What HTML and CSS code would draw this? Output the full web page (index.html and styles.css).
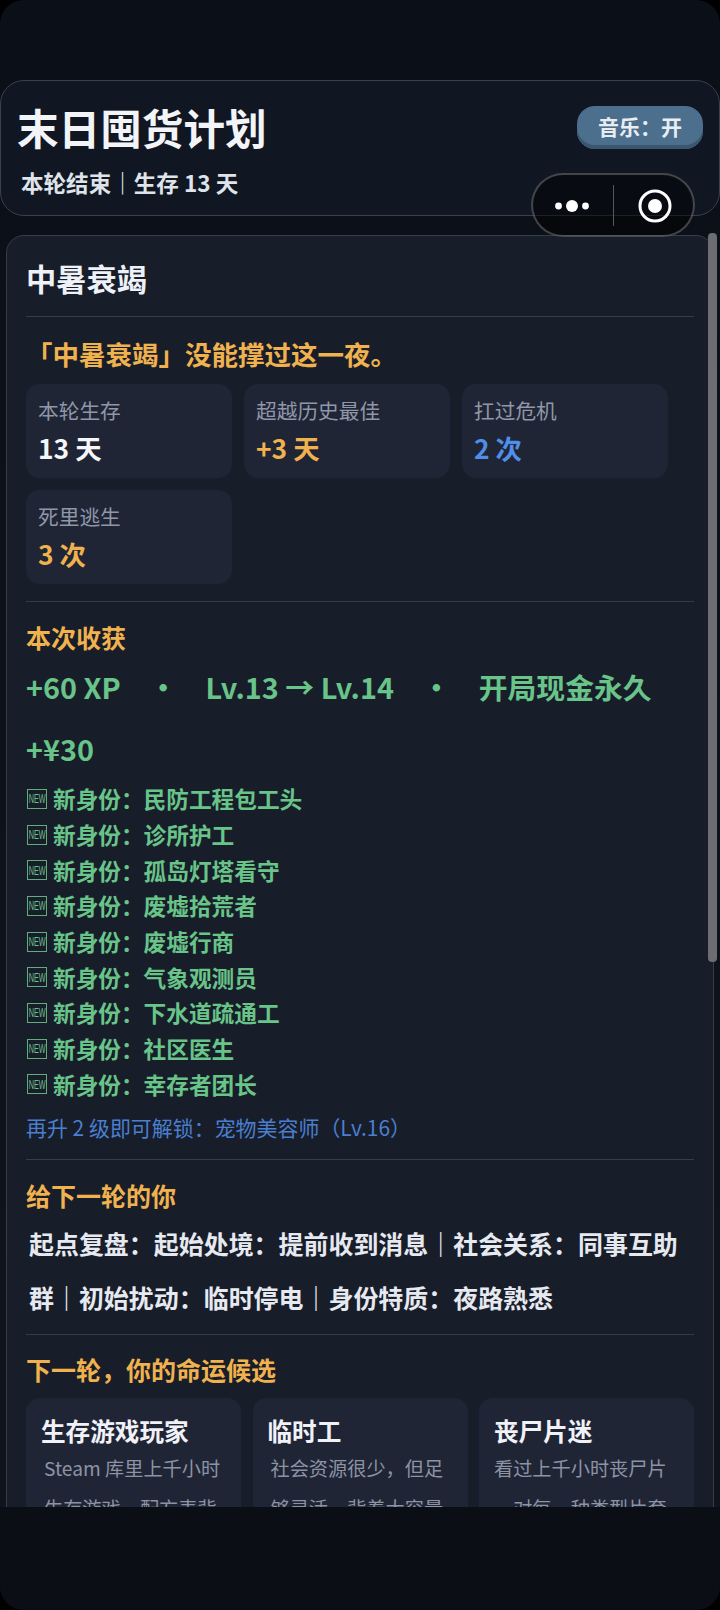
FILE: index.html
```html
<!DOCTYPE html>
<html lang="zh-CN">
<head>
  <meta charset="UTF-8" />
  <title>末日囤货计划</title>
  <meta name="viewport" content="width=device-width, initial-scale=1.0" />
  <link rel="stylesheet" href="styles.css">
</head>
<body>
  <div class="screen">
    <div class="top-space"></div>

    <div class="header">
      <div>
        <div class="game-title">末日囤货计划</div>
        <div class="game-sub">本轮结束｜生存 13 天</div>
      </div>
      <button class="music-btn">音乐：开</button>
    </div>

    <!-- mini program capsule -->
    <div class="capsule">
      <svg class="capsule-more" width="38" height="14" viewBox="0 0 38 14">
        <circle cx="5.5" cy="7" r="3.4" fill="#fff" />
        <circle cx="19" cy="7" r="6" fill="#fff" />
        <circle cx="32.5" cy="7" r="3.4" fill="#fff" />
      </svg>
      <span class="capsule-line"></span>
      <svg class="capsule-close" width="34" height="34" viewBox="0 0 34 34">
        <circle cx="17" cy="17" r="15" fill="none" stroke="#fff" stroke-width="3" />
        <circle cx="17" cy="17" r="7" fill="#fff" />
      </svg>
    </div>

    <div class="panel-wrap">
      <div class="panel">
        <h2 class="panel-title">中暑衰竭</h2>

        <div class="section first">
          <p class="death-text">「中暑衰竭」没能撑过这一夜。</p>
          <div class="stats">
            <div class="stat">
              <div class="stat-label">本轮生存</div>
              <div class="stat-value">13 天</div>
            </div>
            <div class="stat">
              <div class="stat-label">超越历史最佳</div>
              <div class="stat-value orange">+3 天</div>
            </div>
            <div class="stat">
              <div class="stat-label">扛过危机</div>
              <div class="stat-value blue">2 次</div>
            </div>
            <div class="stat">
              <div class="stat-label">死里逃生</div>
              <div class="stat-value orange">3 次</div>
            </div>
          </div>
        </div>

        <div class="section">
          <h3 class="section-title">本次收获</h3>
          <div class="rewards">
            <span>+60 XP</span>
            <span class="dot">·</span>
            <span>Lv.13 → Lv.14</span>
            <span class="dot">·</span>
            <span>开局现金永久</span>
            <span class="reward-cash">+¥30</span>
          </div>
          <ul class="unlocks">
            <li><span class="new-tag"><span>NEW</span></span>新身份：民防工程包工头</li>
            <li><span class="new-tag"><span>NEW</span></span>新身份：诊所护工</li>
            <li><span class="new-tag"><span>NEW</span></span>新身份：孤岛灯塔看守</li>
            <li><span class="new-tag"><span>NEW</span></span>新身份：废墟拾荒者</li>
            <li><span class="new-tag"><span>NEW</span></span>新身份：废墟行商</li>
            <li><span class="new-tag"><span>NEW</span></span>新身份：气象观测员</li>
            <li><span class="new-tag"><span>NEW</span></span>新身份：下水道疏通工</li>
            <li><span class="new-tag"><span>NEW</span></span>新身份：社区医生</li>
            <li><span class="new-tag"><span>NEW</span></span>新身份：幸存者团长</li>
          </ul>
          <p class="next-unlock">再升 2 级即可解锁：宠物美容师（Lv.16）</p>
        </div>

        <div class="section">
          <h3 class="section-title">给下一轮的你</h3>
          <p class="review">起点复盘：起始处境：提前收到消息｜社会关系：同事互助群｜初始扰动：临时停电｜身份特质：夜路熟悉</p>
        </div>

        <div class="section tight">
          <h3 class="section-title">下一轮，你的命运候选</h3>
          <div class="fates">
            <div class="fate">
              <div class="fate-name">生存游戏玩家</div>
              <div class="fate-desc shift">Steam 库里上千小时<br>生存游戏，配方表背</div>
            </div>
            <div class="fate">
              <div class="fate-name">临时工</div>
              <div class="fate-desc shift">社会资源很少，但足<br>够灵活，背着大容量</div>
            </div>
            <div class="fate">
              <div class="fate-name">丧尸片迷</div>
              <div class="fate-desc">看过上千小时丧尸片<br>，对每一种类型片套</div>
            </div>
          </div>
        </div>
      </div>
    </div>

    <div class="scroll-thumb"></div>
    <div class="bottom-bar"></div>
  </div>
</body>
</html>
```

FILE: styles.css
```css
* {
  box-sizing: border-box;
}

html,
body {
  margin: 0;
  height: 100%;
  background: #000;
}

body {
  font-family: "Noto Sans CJK SC", "Noto Sans", sans-serif;
}

.screen {
  position: relative;
  width: 720px;
  height: 1610px;
  display: flex;
  flex-direction: column;
  overflow: hidden;
  border-radius: 24px;
  background: linear-gradient(180deg, #0b0f17 0%, #10141d 100%);
}

.top-space {
  height: 80px;
  flex-shrink: 0;
}

.header {
  height: 136px;
  flex-shrink: 0;
  display: flex;
  justify-content: space-between;
  align-items: flex-start;
  padding: 20px 16px 0 16px;
  background: #111722;
  border: 1px solid #3a404c;
  border-radius: 24px;
}

.game-title {
  font-size: 41.6px;
  line-height: 52px;
  font-weight: 700;
  color: #f2f4f8;
}

.game-sub {
  margin-top: 13px;
  margin-left: 4px;
  font-size: 22.56px;
  line-height: 32px;
  font-weight: 700;
  color: #dfe3ea;
}

.music-btn {
  margin-top: 5px;
  width: 126px;
  height: 43px;
  border: 0;
  border-radius: 18px;
  background: #4d6f8e;
  box-shadow: inset 0 -4px 0 #3a5670;
  color: #e8edf3;
  font-family: inherit;
  font-size: 21px;
  font-weight: 700;
  padding: 0 0 4px;
}

.capsule {
  position: absolute;
  top: 173px;
  left: 531px;
  width: 164px;
  height: 64px;
  display: flex;
  align-items: center;
  padding-top: 1px;
  border: 2px solid rgba(255, 255, 255, 0.24);
  border-radius: 32px;
  background: rgba(0, 0, 0, 0.5);
}

.capsule-more {
  margin-left: 20px;
}

.capsule-line {
  width: 1px;
  height: 41px;
  margin-left: 22px;
  background: #55575c;
}

.capsule-close {
  margin-left: 24px;
}

.panel-wrap {
  flex: 1;
  min-height: 0;
  margin-top: 19px;
  overflow: hidden;
}

.panel {
  margin: 0 6px;
  padding: 14px 19px 0;
  background: #181d2a;
  border: 1px solid #363c4c;
  border-radius: 18px;
}

.panel-title {
  margin: 0;
  font-size: 30.24px;
  line-height: 56px;
  font-weight: 700;
  color: #eef1f7;
}

.section {
  border-top: 1px solid #363c4a;
  padding-top: 16px;
  margin-top: 17px;
}

.section.first {
  margin-top: 10px;
  padding-top: 17px;
}

.section.tight {
  margin-top: 10px;
  padding-top: 15px;
}

.death-text {
  margin: 0;
  font-size: 26.5px;
  line-height: 40px;
  font-weight: 700;
  color: #f0b24e;
}

.stats {
  display: grid;
  grid-template-columns: repeat(3, 206px);
  gap: 12px;
  margin-top: 10px;
}

.stat {
  height: 94px;
  padding: 12px 12px 0;
  background: #202536;
  border-radius: 14px;
}

.stat-label {
  font-size: 20.7px;
  line-height: 28px;
  color: #8f97a8;
}

.stat-value {
  margin-top: 7px;
  font-size: 26.4px;
  line-height: 34px;
  font-weight: 700;
  color: #f4f6fa;
}

.orange {
  color: #f0b24e;
}

.blue {
  color: #4f8fea;
}

.section-title {
  margin: 0;
  font-size: 25px;
  line-height: 38px;
  font-weight: 700;
  color: #f0b24e;
}

.rewards {
  display: flex;
  flex-wrap: wrap;
  font-size: 28.8px;
  line-height: 62px;
  font-weight: 700;
  color: #68c488;
}

.dot {
  margin: 0 28px;
}

.reward-cash {
  width: 100%;
}

.unlocks {
  margin: 1px 0 0;
  padding: 0;
  list-style: none;
}

.unlocks li {
  display: flex;
  align-items: center;
  height: 35.7px;
  font-size: 22.67px;
  font-weight: 700;
  color: #68c488;
}

.new-tag {
  width: 20px;
  height: 20px;
  margin: 0 6px 0 1px;
  display: flex;
  align-items: center;
  justify-content: center;
  overflow: hidden;
  border: 1px solid #5fae7c;
  font-family: "Liberation Sans", sans-serif;
  font-size: 13px;
  font-weight: 400;
  color: #6cc08a;
}

.new-tag span {
  display: inline-block;
  transform: scaleX(0.56);
}

.next-unlock {
  margin: 10px 0 0;
  font-size: 20.96px;
  line-height: 30px;
  color: #4a7fd0;
}

.review {
  margin: 2px 0 0 3px;
  font-size: 24.96px;
  line-height: 54px;
  font-weight: 700;
  color: #e6e9f0;
}

.fates {
  display: grid;
  grid-template-columns: repeat(3, 1fr);
  gap: 11.5px;
  margin-top: 10px;
}

.fate {
  height: 200px;
  padding: 15px 15px;
  background: #202536;
  border-radius: 14px;
}

.fate-name {
  font-size: 24.6px;
  line-height: 35px;
  font-weight: 700;
  color: #f0f2f7;
}

.fate-desc {
  font-size: 19.2px;
  line-height: 40px;
  color: #8c93a4;
  white-space: nowrap;
}

.fate-desc.shift {
  padding-left: 3px;
}

.scroll-thumb {
  position: absolute;
  top: 233px;
  left: 708px;
  width: 9px;
  height: 729px;
  border-radius: 4px;
  background: #6b6d72;
}

.bottom-bar {
  height: 103px;
  flex-shrink: 0;
  background: #0b0e15;
}
```
